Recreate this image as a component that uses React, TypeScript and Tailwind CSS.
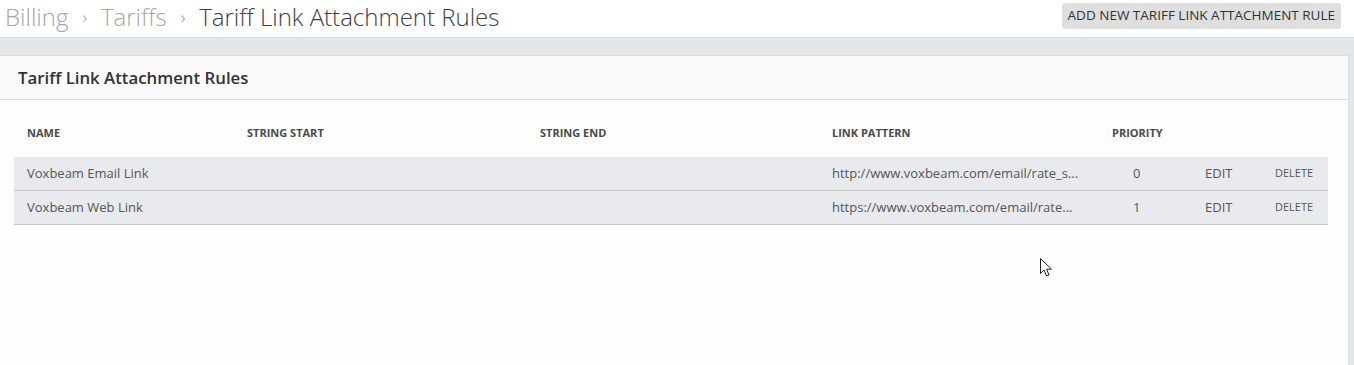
import React from "react";

const rows = [
  { name: "Voxbeam Email Link", pattern: "http://www.voxbeam.com/email/rate_s...", priority: "0" },
  { name: "Voxbeam Web Link", pattern: "https://www.voxbeam.com/email/rate...", priority: "1" },
];

const cols = "grid grid-cols-[220px_293px_292px_280px_93px_70px_66px]";

export default function App() {
  return (
    <div
      className="relative w-[1354px] h-[365px] overflow-hidden bg-[#e4e7ea] text-[#555]"
      style={{ fontFamily: '"Open Sans", "Liberation Sans", sans-serif' }}
    >
      {/* Top bar */}
      <div className="h-[38px] bg-white flex items-center justify-between pl-[5px] pr-[13px] border-b border-[#d6d9dd]">
        <div className="flex items-center text-[24px] font-light leading-none mt-[-4px]">
          <span className="text-[#a4a6a9]">Billing</span>
          <span className="text-[#9a9c9f] text-[18px] mx-[14px]">›</span>
          <span className="text-[#aaa79c]">Tariffs</span>
          <span className="text-[#8a8c90] text-[18px] mx-[14px]">›</span>
          <span className="text-[#3b3f47]">Tariff Link Attachment Rules</span>
        </div>
        <button className="h-[26px] px-[6px] mt-[-6px] rounded-[3px] bg-[#dfdfdf] text-[13.5px] text-[#333] font-medium">
          ADD NEW TARIFF LINK ATTACHMENT RULE
        </button>
      </div>

      {/* Card */}
      <div className="mt-[17px] mr-[5px] h-[320px] bg-[#fdfdfd] border-t border-r border-[#dcdcdc]">
        <div className="h-[44px] bg-[#fafafa] border-b border-[#dcdcdc] flex items-center pl-[18px]">
          <h2 className="text-[16.8px] font-semibold text-[#333]">Tariff Link Attachment Rules</h2>
        </div>
        <div className="pl-[14px] pr-[20px] pt-[14px]">
          <div className={`${cols} h-[43px] items-center pb-[4px] text-[11px] font-bold text-[#4a4a4a]`}>
            <div className="pl-[13px]">NAME</div>
            <div className="pl-[13px]">STRING START</div>
            <div className="pl-[13px]">STRING END</div>
            <div className="pl-[13px]">LINK PATTERN</div>
            <div className="pl-[13px]">PRIORITY</div>
            <div></div>
            <div></div>
          </div>
          {rows.map((r) => (
            <div
              key={r.name}
              className={`${cols} h-[34px] items-center bg-[#e9eaee] border-b border-[#c6c6c8] text-[13px] text-[#555]`}
            >
              <div className="pl-[13px]">{r.name}</div>
              <div></div>
              <div></div>
              <div className="pl-[13px] whitespace-nowrap">{r.pattern}</div>
              <div className="pl-[34px]">{r.priority}</div>
              <div className="pl-[13px]">EDIT</div>
              <div className="pl-[13px] text-[11px]">DELETE</div>
            </div>
          ))}
        </div>
      </div>

      {/* mouse cursor */}
      <svg
        className="absolute left-[1040px] top-[258px]"
        width="13"
        height="20"
        viewBox="0 0 13 20"
      >
        <path
          d="M0.5 0.5 L0.5 15.5 L4 12 L6.5 18 L9 17 L6.6 11.2 L11.5 11.2 Z"
          fill="white"
          stroke="#222"
          strokeWidth="1"
          strokeLinejoin="miter"
        />
      </svg>
    </div>
  );
}
